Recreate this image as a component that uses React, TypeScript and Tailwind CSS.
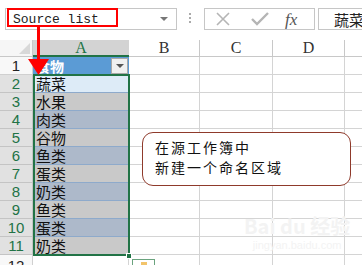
import React from "react";

type Row = { n: number; text: string; bg: string };

const rows: Row[] = [
  { n: 2, text: "蔬菜", bg: "bg-[#ddebf7]" },
  { n: 3, text: "水果", bg: "bg-[#c9c9c9]" },
  { n: 4, text: "肉类", bg: "bg-[#adb9ca]" },
  { n: 5, text: "谷物", bg: "bg-[#c9c9c9]" },
  { n: 6, text: "鱼类", bg: "bg-[#adb9ca]" },
  { n: 7, text: "蛋类", bg: "bg-[#c9c9c9]" },
  { n: 8, text: "奶类", bg: "bg-[#adb9ca]" },
  { n: 9, text: "鱼类", bg: "bg-[#c9c9c9]" },
  { n: 10, text: "蛋类", bg: "bg-[#adb9ca]" },
  { n: 11, text: "奶类", bg: "bg-[#c9c9c9]" },
];

const cjk = "font-['Noto_Sans_CJK_SC',sans-serif]";

// plain empty cells for columns B..E
const EmptyCells: React.FC = () => (
  <>
    <div className="w-[71px] shrink-0 border-r border-b border-[#d4d4d4]" />
    <div className="w-[73px] shrink-0 border-r border-b border-[#d4d4d4]" />
    <div className="w-[72px] shrink-0 border-r border-b border-[#d4d4d4]" />
    <div className="flex-1 border-b border-[#d4d4d4]" />
  </>
);

const Toolbar: React.FC = () => (
  <div className="h-[40px] flex items-start pt-[8px]">
    <div className="ml-[5px] w-[172px] h-[22px] shrink-0 border border-[#c6c6c6] relative flex items-center">
      <div className="absolute left-[1px] top-[-1px] w-[111px] h-[19px] border-2 border-[#ff0000]" />
      <span className="ml-[7px] text-[13px] leading-none text-[#222] whitespace-nowrap font-['Liberation_Mono',monospace]">
        Source list
      </span>
      <span className="ml-auto mr-[8px] w-0 h-0 border-l-[4px] border-r-[4px] border-t-[4px] border-l-transparent border-r-transparent border-t-[#777]" />
    </div>
    <div className="ml-[12px] mt-[5px] flex flex-col gap-[2px] shrink-0">
      <span className="w-[2px] h-[2px] bg-[#aaa]" />
      <span className="w-[2px] h-[2px] bg-[#aaa]" />
      <span className="w-[2px] h-[2px] bg-[#aaa]" />
    </div>
    <div className="ml-[13px] w-[111px] h-[22px] shrink-0 border border-[#c6c6c6] flex items-center">
      <svg width="16" height="14" viewBox="0 0 16 14" className="ml-[10px]">
        <path d="M2 1 L14 13 M14 1 L2 13" stroke="#b5b5b5" strokeWidth="1.6" fill="none" />
      </svg>
      <svg width="18" height="14" viewBox="0 0 18 14" className="ml-[20px]">
        <path d="M1 7 L6 12 L17 1" stroke="#b5b5b5" strokeWidth="2.4" fill="none" />
      </svg>
      <span className="ml-[16px] text-[17px] leading-none italic text-[#555] font-['Liberation_Serif',serif]">
        fx
      </span>
    </div>
    <div className="ml-[3px] flex-1 min-w-0 h-[22px] border border-r-0 border-[#c6c6c6] flex items-center overflow-hidden">
      <span className={`ml-[15px] text-[15px] leading-none text-[#222] whitespace-nowrap ${cjk}`}>蔬菜</span>
    </div>
  </div>
);

const HeaderRow: React.FC = () => (
  <div className="flex h-[17px] font-['Liberation_Serif',serif] text-[16px] leading-none text-[#333]">
    <div className="w-[33px] shrink-0 border-r border-b border-[#c8c8c8] bg-[#f6f6f6] relative">
      <svg className="absolute right-[2px] bottom-[2px]" width="11" height="11" viewBox="0 0 11 11">
        <polygon points="11,0 11,11 0,11" fill="#d8d8d8" />
      </svg>
    </div>
    <div className="w-[96px] shrink-0 bg-[#d3d3d3] border-b-2 border-[#217346] flex items-center justify-center text-[#217346]">
      A
    </div>
    <div className="w-[71px] shrink-0 border-r border-b border-[#c8c8c8] flex items-center justify-center">B</div>
    <div className="w-[73px] shrink-0 border-r border-b border-[#c8c8c8] flex items-center justify-center">C</div>
    <div className="w-[72px] shrink-0 border-r border-b border-[#c8c8c8] flex items-center justify-center">D</div>
    <div className="flex-1 border-b border-[#c8c8c8]" />
  </div>
);

const Sheet: React.FC = () => (
  <div className="relative">
    <HeaderRow />
    {/* row 1: header cell with filter button */}
    <div className="flex h-[18px]">
      <div className="w-[33px] shrink-0 border-r border-b border-[#d0d0d0] bg-[#f8f8f8] flex items-center justify-center text-[15px] leading-none text-[#222] font-['Liberation_Sans',sans-serif]">
        1
      </div>
      <div className="w-[96px] shrink-0 bg-[#5b9bd5] border-b border-[#5b9bd5] flex items-center pl-[3px] pr-[1px]">
        <span className={`text-[14px] leading-[14px] font-bold text-white ${cjk}`}>食物</span>
        <span className="ml-auto w-[17px] h-[16px] bg-[#f0f0f0] border border-[#a8a8a8] flex items-center justify-center">
          <span className="w-0 h-0 border-l-[4px] border-r-[4px] border-t-[4px] border-l-transparent border-r-transparent border-t-[#555]" />
        </span>
      </div>
      <EmptyCells />
    </div>
    {rows.map((r) => (
      <div key={r.n} className="flex h-[18px]">
        <div className="w-[33px] shrink-0 border-r border-b border-[#c4c4c4] bg-[#e1e1e1] flex items-center justify-center text-[15px] leading-none text-[#217346] font-['Liberation_Sans',sans-serif]">
          {r.n}
        </div>
        <div className={`w-[96px] shrink-0 ${r.bg} border-b border-[#8eaacb] flex items-center pl-[3px]`}>
          <span className={`text-[15px] leading-[15px] text-[#111] ${cjk}`}>{r.text}</span>
        </div>
        <EmptyCells />
      </div>
    ))}
    <div className="flex h-[18px]">
      <div className="w-[33px] shrink-0 border-r border-b border-[#d0d0d0] bg-[#f8f8f8] flex items-start justify-center pt-[3px] text-[15px] leading-none text-[#222] font-['Liberation_Sans',sans-serif]">
        12
      </div>
      <div className="w-[96px] shrink-0 border-r border-b border-[#d4d4d4]" />
      <EmptyCells />
    </div>

    {/* selection A2:A11 */}
    <div className="absolute left-[33px] top-[34px] w-[97px] h-[182px] border-2 border-[#217346] pointer-events-none" />
    <div className="absolute left-[126px] top-[213px] w-[6px] h-[6px] bg-[#217346] border border-white" />
    {/* paste options tag */}
    <div className="absolute left-[132px] top-[219px] w-[23px] h-[12px] border border-[#6aa37e] bg-white">
      <span className="absolute left-[8px] top-[2px] w-[6px] h-[4px] bg-[#f2c46b]" />
    </div>
  </div>
);

const App: React.FC = () => {
  return (
    <div className="w-[362px] h-[265px] bg-white relative overflow-hidden">
      <Toolbar />
      <Sheet />

      {/* callout */}
      <div className="absolute left-[142px] top-[132px] w-[209px] h-[54px] rounded-[11px] border-[1.5px] border-[#8f3a2b] bg-white pl-[12px] pt-[4px]">
        <p className={`text-[14px] leading-[20px] tracking-[2px] text-[#111] ${cjk}`}>在源工作簿中</p>
        <p className={`text-[14px] leading-[20px] tracking-[2px] text-[#111] ${cjk}`}>新建一个命名区域</p>
      </div>

      {/* faint watermark */}
      <div className="absolute left-[244px] top-[216px] flex flex-col items-center pointer-events-none">
        <span className={`text-[20px] leading-none font-bold text-[#f3f3f3] ${cjk}`}>Bai du 经验</span>
        <span className="mt-[4px] text-[11px] leading-none text-[#f3f3f3] font-['Liberation_Sans',sans-serif]">
          jingyan.baidu.com
        </span>
      </div>

      {/* red arrow from name box to A1 */}
      <svg className="absolute left-0 top-0 pointer-events-none" width="362" height="265">
        <rect x="37" y="25" width="3" height="36" fill="#ff0000" />
        <polygon points="28,59 49,59 38.5,75" fill="#ff0000" />
      </svg>
    </div>
  );
};

export default App;
